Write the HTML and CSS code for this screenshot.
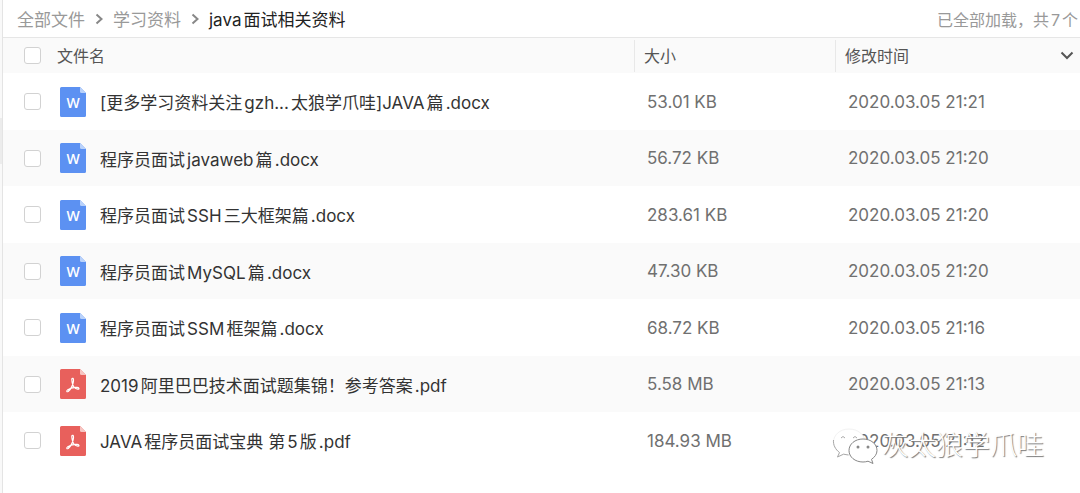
FILE: index.html
```html
<!DOCTYPE html>
<html lang="zh-CN">
<head>
<meta charset="UTF-8">
<title>java面试相关资料</title>
<link rel="stylesheet" href="styles.css">
</head>
<body>
<svg class="sprite" aria-hidden="true">
    <symbol id="doc" viewBox="0 0 26 30">
        <path fill="#5c91f2" d="M1.5 0H20l6 6v22.5a1.5 1.5 0 0 1-1.5 1.5h-23A1.5 1.5 0 0 1 0 28.5v-27A1.5 1.5 0 0 1 1.5 0z"/>
        <path fill="#b9d2fb" d="M20 0l6 6h-4.5a1.5 1.5 0 0 1-1.5-1.5z"/>
        <text class="letter" x="13" y="21" text-anchor="middle">W</text>
    </symbol>
    <symbol id="pdf" viewBox="0 0 26 30">
        <path fill="#e8605c" d="M1.5 0H20l6 6v22.5a1.5 1.5 0 0 1-1.5 1.5h-23A1.5 1.5 0 0 1 0 28.5v-27A1.5 1.5 0 0 1 1.5 0z"/>
        <path fill="#f7c5c2" d="M20 0l6 6h-4.5a1.5 1.5 0 0 1-1.5-1.5z"/>
        <path fill="none" stroke="#fff" stroke-width="1.2" stroke-linejoin="round" stroke-linecap="round" d="M12 9.5c1.6-.8 1.8 1.200 1.200 4-.8 3.600-3 7.400-5 8.900-1.400.8-2-.3-.8-1.300 2.600-2 6.800-3 9.800-2.700 2.400.3 2.200 2 .6 1.800-2.700-.5-5-3.200-5.500-6.200-.4-2-.9-3.800-.3-4.500z"/>
    </symbol>
</svg>
<div class="page">
    <aside class="sidebar"></aside>
    <main class="content">
        <header class="topbar">
            <nav class="breadcrumb">
                <a href="#">全部文件</a>
                <svg class="arrow" viewBox="0 0 8 12"><path d="M1.5 1.5L6.5 6l-5 4.5"/></svg>
                <a href="#">学习资料</a>
                <svg class="arrow" viewBox="0 0 8 12"><path d="M1.5 1.5L6.5 6l-5 4.5"/></svg>
                <span class="current">java面试相关资料</span>
            </nav>
            <span class="status">已全部加载，共7个</span>
        </header>
        <table class="files">
            <colgroup>
                <col class="col-check">
                <col class="col-name">
                <col class="col-size">
                <col class="col-time">
            </colgroup>
            <thead>
                <tr>
                    <th><input type="checkbox" aria-label="全选"></th>
                    <th>文件名</th>
                    <th class="line">大小</th>
                    <th class="line">
                        <div class="sort">修改时间
                            <svg class="down" viewBox="0 0 14 9"><path d="M1.5 1.5L7 7l5.5-5.5"/></svg>
                        </div>
                    </th>
                </tr>
            </thead>
            <tbody>
                <tr>
                    <td><input type="checkbox" id="f1"></td>
                    <td><label class="name" for="f1"><svg class="icon"><use href="#doc"/></svg>[更多学习资料关注gzh...太狼学爪哇]JAVA篇.docx</label></td>
                    <td class="size">53.01 KB</td>
                    <td class="time">2020.03.05 21:21</td>
                </tr>
                <tr>
                    <td><input type="checkbox" id="f2"></td>
                    <td><label class="name" for="f2"><svg class="icon"><use href="#doc"/></svg>程序员面试javaweb篇.docx</label></td>
                    <td class="size">56.72 KB</td>
                    <td class="time">2020.03.05 21:20</td>
                </tr>
                <tr>
                    <td><input type="checkbox" id="f3"></td>
                    <td><label class="name" for="f3"><svg class="icon"><use href="#doc"/></svg>程序员面试SSH三大框架篇.docx</label></td>
                    <td class="size">283.61 KB</td>
                    <td class="time">2020.03.05 21:20</td>
                </tr>
                <tr>
                    <td><input type="checkbox" id="f4"></td>
                    <td><label class="name" for="f4"><svg class="icon"><use href="#doc"/></svg>程序员面试MySQL篇.docx</label></td>
                    <td class="size">47.30 KB</td>
                    <td class="time">2020.03.05 21:20</td>
                </tr>
                <tr>
                    <td><input type="checkbox" id="f5"></td>
                    <td><label class="name" for="f5"><svg class="icon"><use href="#doc"/></svg>程序员面试SSM框架篇.docx</label></td>
                    <td class="size">68.72 KB</td>
                    <td class="time">2020.03.05 21:16</td>
                </tr>
                <tr>
                    <td><input type="checkbox" id="f6"></td>
                    <td><label class="name" for="f6"><svg class="icon"><use href="#pdf"/></svg>2019阿里巴巴技术面试题集锦！参考答案.pdf</label></td>
                    <td class="size">5.58 MB</td>
                    <td class="time">2020.03.05 21:13</td>
                </tr>
                <tr>
                    <td><input type="checkbox" id="f7"></td>
                    <td><label class="name" for="f7"><svg class="icon"><use href="#pdf"/></svg>JAVA程序员面试宝典 第5版.pdf</label></td>
                    <td class="size">184.93 MB</td>
                    <td class="time">2020.03.05 21:12</td>
                </tr>
            </tbody>
        </table>
    </main>
    <div class="watermark">
        <svg class="wechat" viewBox="0 0 46 38">
            <path class="faint" d="M17 2C8 2 1.5 8 1.5 15c0 4.5 2.5 8 6 10.5L5.5 30l6-2.8c2 .6 4 .8 6 .8 9 0 15.5-6 15.5-13S26 2 17 2z"/>
            <path class="edge" d="M1.5 13c-.5 5 2 9.5 6 12.5L5.5 30l6-2.8 5 .8M9 11q2-3 4 0M21 11q2-3 4 0"/>
            <path class="bubble" d="M31 12c-8 0-14 5-14 11.5S23 35 31 35c2 0 3.5-.3 5-.8l5 2.3-1.5-4.2c3.300-2.200 5.500-5.200 5.500-8.800C45 17 39 12 31 12z"/>
            <circle cx="26" cy="20" r="1.5"/>
            <circle cx="36" cy="20" r="1.5"/>
        </svg>
        <span>灰太狼学爪哇</span>
    </div>
</div>
</body>
</html>
```
FILE: styles.css
```css
* {
    box-sizing: border-box;
}
body {
    margin: 0;
    background: #fff;
    color: #333;
    font-family: Inter, "Noto Sans CJK SC", sans-serif;
    font-size: 17px;
    text-autospace: normal;
}
.sprite {
    display: none;
}
.letter {
    fill: #fff;
    font: 600 14px "Open Sans", sans-serif;
}
.page {
    display: flex;
    position: relative;
    min-height: 100vh;
}
.sidebar {
    width: 3px;
    border-right: 1px solid #e4e4e4;
    background: linear-gradient(#f9f9f9 118px, #ececec 118px, #ececec 164px, #f9f9f9 164px);
}
.content {
    flex: 1;
}
.topbar {
    display: flex;
    justify-content: space-between;
    align-items: center;
    height: 38px;
    padding: 0 2px 0 14px;
    border-bottom: 1px solid #e6e6e6;
}
.breadcrumb {
    display: flex;
    align-items: center;
    gap: 10px;
}
.breadcrumb a {
    color: #999;
    text-decoration: none;
}
.breadcrumb .current {
    color: #222;
}
.arrow {
    width: 8px;
    height: 12px;
}
.arrow path, .down path {
    fill: none;
    stroke: #888;
    stroke-width: 2;
}
.status {
    color: #999;
    font-size: 16px;
}

/* file list */
.files {
    width: 100%;
    border-collapse: collapse;
    table-layout: fixed;
}
.col-check {
    width: 54px;
}
.col-size {
    width: 201px;
}
.col-time {
    width: 245px;
}
th, td {
    padding: 0;
    font-weight: normal;
    text-align: left;
    white-space: nowrap;
}
th {
    height: 35px;
    background: #fafafa;
    color: #555;
    font-size: 16px;
    line-height: 20px;
}
th.line {
    padding-left: 10px;
    background: linear-gradient(#e8e8e8, #e8e8e8) no-repeat 0 2px / 1px 32px #fafafa;
}
.sort {
    display: flex;
    justify-content: space-between;
    align-items: center;
    padding-right: 6px;
}
.down {
    width: 14px;
    height: 9px;
}
.down path {
    stroke: #555;
}
tbody tr {
    height: 57px;
}
tbody tr:nth-child(even) {
    height: 56px;
    background: #fafafa;
}
input[type="checkbox"] {
    appearance: none;
    display: block;
    width: 17px;
    height: 17px;
    margin: 0 0 0 21px;
    border: 1px solid #d2d2d2;
    border-radius: 3px;
    background: #fff;
}
.name {
    display: flex;
    align-items: center;
    padding-left: 3px;
}
.icon {
    width: 26px;
    height: 30px;
    margin-right: 14px;
}
.size, .time {
    padding-left: 13px;
    color: #707070;
}

/* watermark over the last row */
.watermark {
    display: flex;
    align-items: center;
    position: absolute;
    right: 36px;
    bottom: 28px;
    color: #fff;
    font-size: 27px;
    font-weight: 300;
    line-height: 38px;
    text-shadow: 1px 1px 1px #777;
}
.wechat {
    width: 46px;
    height: 38px;
    margin-right: 4px;
}
.wechat .faint {
    fill: #fff;
    stroke: #f2f2f2;
}
.wechat .edge {
    fill: none;
    stroke: #aaa;
}
.wechat .bubble {
    fill: #fff;
    stroke: #888;
}
.wechat circle {
    fill: #888;
}
```
